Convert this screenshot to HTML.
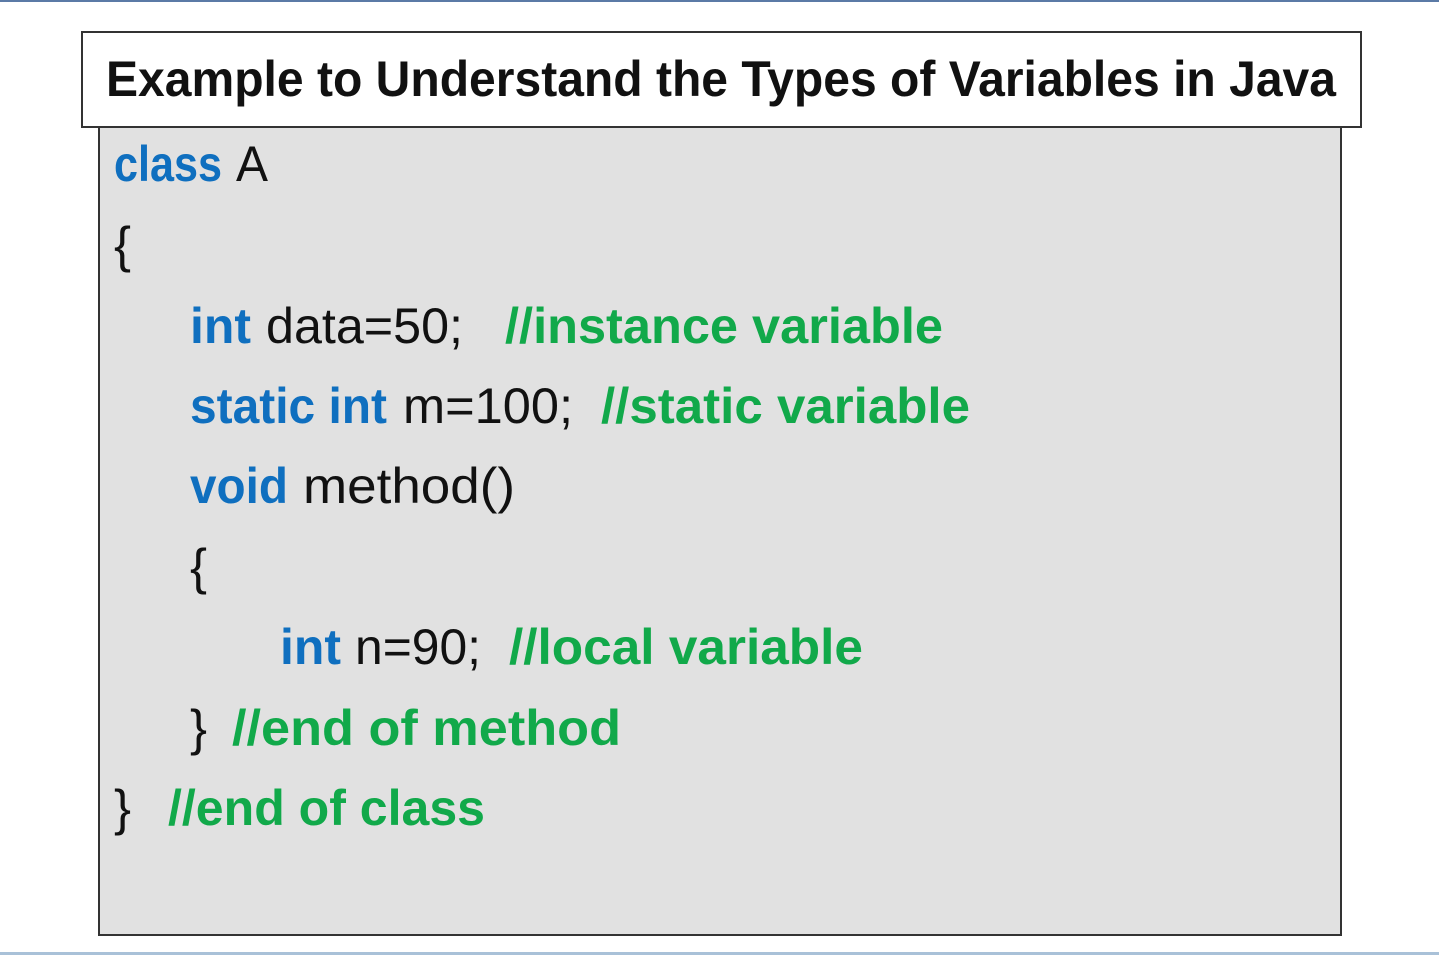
<!DOCTYPE html>
<html><head><meta charset="utf-8"><style>
html,body{margin:0;padding:0;background:#fff;width:1439px;height:955px;overflow:hidden}
svg{display:block}
text{font-family:"Liberation Sans",sans-serif;font-size:50px}
.k{fill:#0f6fbf;font-weight:bold}
.c{fill:#11a94a;font-weight:bold}
.n{fill:#111}
</style></head><body>
<svg width="1439" height="955" viewBox="0 0 1439 955" xmlns="http://www.w3.org/2000/svg">
<rect x="0" y="0" width="1439" height="2" fill="#5b7aa6"/>
<rect x="0" y="952" width="1439" height="3" fill="#a9c1d8"/>
<rect x="99" y="127" width="1242" height="808" fill="#e1e1e1" stroke="#333" stroke-width="2"/>
<rect x="82" y="32" width="1279" height="95" fill="#fff" stroke="#333" stroke-width="2"/>
<text x="106" y="96" font-weight="bold" font-size="48" fill="#111" textLength="1230" lengthAdjust="spacingAndGlyphs">Example to Understand the Types of Variables in Java</text>

<text class="k" x="114" y="181" textLength="108" lengthAdjust="spacingAndGlyphs">class</text>
<text class="n" x="236" y="181" textLength="32" lengthAdjust="spacingAndGlyphs">A</text>
<text class="n" x="114" y="262" textLength="17" lengthAdjust="spacingAndGlyphs">{</text>

<text class="k" x="190" y="343" textLength="61" lengthAdjust="spacingAndGlyphs">int</text>
<text class="n" x="266" y="343" textLength="197" lengthAdjust="spacingAndGlyphs">data=50;</text>
<text class="c" x="505" y="343" textLength="438" lengthAdjust="spacingAndGlyphs">//instance variable</text>

<text class="k" x="190" y="423" textLength="197" lengthAdjust="spacingAndGlyphs">static int</text>
<text class="n" x="403" y="423" textLength="170" lengthAdjust="spacingAndGlyphs">m=100;</text>
<text class="c" x="601" y="423" textLength="369" lengthAdjust="spacingAndGlyphs">//static variable</text>

<text class="k" x="190" y="503" textLength="98" lengthAdjust="spacingAndGlyphs">void</text>
<text class="n" x="303" y="503" textLength="212" lengthAdjust="spacingAndGlyphs">method()</text>

<text class="n" x="190" y="584" textLength="17" lengthAdjust="spacingAndGlyphs">{</text>

<text class="k" x="280" y="664" textLength="61" lengthAdjust="spacingAndGlyphs">int</text>
<text class="n" x="355" y="664" textLength="126" lengthAdjust="spacingAndGlyphs">n=90;</text>
<text class="c" x="509" y="664" textLength="354" lengthAdjust="spacingAndGlyphs">//local variable</text>

<text class="n" x="190" y="745" textLength="17" lengthAdjust="spacingAndGlyphs">}</text>
<text class="c" x="232" y="745" textLength="389" lengthAdjust="spacingAndGlyphs">//end of method</text>

<text class="n" x="114" y="825" textLength="17" lengthAdjust="spacingAndGlyphs">}</text>
<text class="c" x="168" y="825" textLength="317" lengthAdjust="spacingAndGlyphs">//end of class</text>
</svg>
</body></html>
